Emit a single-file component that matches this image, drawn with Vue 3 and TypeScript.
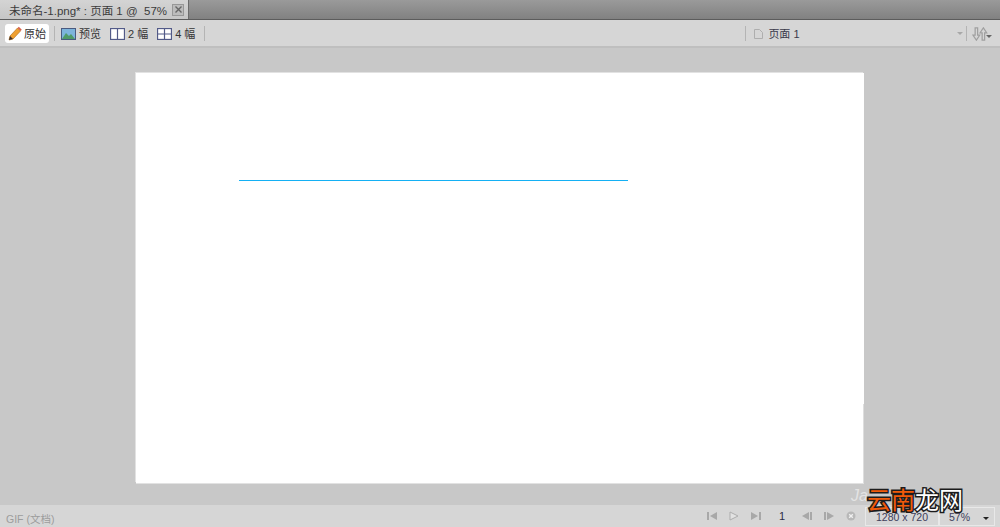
<script setup lang="ts">
const viewButtons = [
  { label: '预览', icon: 'preview' },
  { label: '2 幅', icon: 'two' },
  { label: '4 幅', icon: 'four' },
]
</script>

<template>
  <div class="window">
    <div class="tabbar">
      <div class="tab">
        <span>未命名-1.png* : 页面 1 @&nbsp; 57%</span>
        <span class="tab-close">
          <svg width="9" height="9" viewBox="0 0 9 9"><path d="M1.5 1.5l6 6M7.5 1.5l-6 6" stroke="#666" stroke-width="1.4" fill="none" /></svg>
        </span>
      </div>
    </div>

    <div class="toolbar">
      <div class="btn-original">
        <svg width="15" height="15" viewBox="0 0 15 15">
          <path d="M1 14l1-4 7.5-8 3 3L5 13z" fill="#f0a030" stroke="#a86818" stroke-width=".6" />
          <path d="M9.5 2l1.3-1.2 3 3L12.5 5z" fill="#d8604c" />
          <path d="M1 14l1-4 3 3z" fill="#40302a" />
        </svg>
        <span>原始</span>
      </div>
      <div class="sep"></div>
      <div v-for="b in viewButtons" :key="b.label" class="view-btn">
        <svg v-if="b.icon === 'preview'" width="15" height="12" viewBox="0 0 15 12">
          <rect x=".5" y=".5" width="14" height="11" fill="#7db4dc" stroke="#4a5a80" />
          <path d="M1 11l4-6 3 3 2-2 4 5z" fill="#4f9a68" />
        </svg>
        <svg v-else width="15" height="12" viewBox="0 0 15 12">
          <rect x=".5" y=".5" width="14" height="11" fill="#fff" stroke="#525a88" stroke-width="1.3" />
          <path v-if="b.icon === 'two'" d="M7.5 1v10" stroke="#525a88" stroke-width="1.2" />
          <path v-else d="M7.5 1v10M1 6h13" stroke="#525a88" stroke-width="1.2" />
        </svg>
        <span>{{ b.label }}</span>
      </div>
      <div class="sep last"></div>

      <div class="toolbar-right">
        <div class="sep"></div>
        <svg class="page-icon" width="9" height="10" viewBox="0 0 9 10"><path d="M.5.5h5l3 3v6h-8z" fill="none" stroke="#aeaeae" /></svg>
        <span class="page-name">页面 1</span>
        <span class="combo-arrow"></span>
        <div class="sep"></div>
        <svg class="updown" width="17" height="14" viewBox="0 0 20 17">
          <path d="M3.5 1h3v9H9l-4 6-4-6h2.500z" fill="none" stroke="#a0a0a0" stroke-width="1.5" />
          <path d="M12 16V7H9.500l4-6 4 6H15v9z" fill="none" stroke="#a0a0a0" stroke-width="1.5" />
        </svg>
        <span class="combo-arrow small"></span>
      </div>
    </div>

    <div class="canvas">
      <div class="page">
        <div class="line"></div>
      </div>
    </div>

    <div class="statusbar">
      <span class="doc-type">GIF (文档)</span>
      <div class="player">
        <svg width="10" height="10" viewBox="0 0 10 10"><path d="M0 1h2v8H0zM10 1v8L3 5z" fill="#a8a8a8" /></svg>
        <svg width="10" height="10" viewBox="0 0 10 10"><path d="M1 1v8l8-4z" fill="#e2e2e2" stroke="#adadad" /></svg>
        <svg width="10" height="10" viewBox="0 0 10 10"><path d="M0 1v8l7-4zM8 1h2v8H8z" fill="#a8a8a8" /></svg>
        <span class="frame">1</span>
        <svg width="10" height="10" viewBox="0 0 10 10"><path d="M7 1v8L0 5zM8 1h2v8H8z" fill="#a8a8a8" /></svg>
        <svg width="10" height="10" viewBox="0 0 10 10"><path d="M0 1h2v8H0zM3 1v8l7-4z" fill="#a8a8a8" /></svg>
        <svg width="10" height="10" viewBox="0 0 10 10"><circle cx="5" cy="5" r="4.500" fill="#b8b8b8" /><path d="M3.200 3.200l3.600 3.600M6.800 3.200l-3.600 3.600" stroke="#f0f0f0" stroke-width="1.400" /></svg>
      </div>
      <div class="size-box">1280 x 720</div>
      <div class="zoom-box">
        <span>57%</span>
        <span class="zoom-arrow"></span>
      </div>
    </div>

    <div class="watermark"><span class="wm-ja">Ja</span><span class="wm-orange">云南</span><span class="wm-white">龙网</span></div>
  </div>
</template>

<style scoped>
.window {
  position: relative;
  display: flex;
  flex-direction: column;
  width: 1000px;
  height: 527px;
  overflow: hidden;
  background: #c8c8c8;
  font-family: "Liberation Sans", "Noto Sans CJK SC", sans-serif;
  font-size: 11px;
  color: #333;
}
.tabbar {
  display: flex;
  flex: none;
  height: 20px;
  box-sizing: border-box;
  background: linear-gradient(#9a9a9a, #818181);
  border-bottom: 1px solid #5c5c5c;
}
.tab {
  display: flex;
  align-items: center;
  justify-content: space-between;
  width: 189px;
  box-sizing: border-box;
  padding: 0 4px 0 9px;
  background: linear-gradient(#d4d4d4, #c6c6c6);
  border-right: 1px solid #6c6c6c;
  font-size: 11.5px;
  color: #3c3c3c;
  white-space: nowrap;
}
.tab-close {
  display: flex;
  align-items: center;
  justify-content: center;
  width: 12px;
  height: 12px;
  box-sizing: border-box;
  background: #bcbcbc;
  border: 1px solid #989898;
}
.toolbar {
  display: flex;
  flex: none;
  align-items: center;
  height: 28px;
  box-sizing: border-box;
  padding: 1px 0 0 5px;
  background: #d6d6d6;
  border-bottom: 2px solid #bfbfbf;
}
.btn-original {
  display: flex;
  align-items: center;
  gap: 1px;
  width: 44px;
  height: 19px;
  box-sizing: border-box;
  padding-left: 3px;
  background: #fff;
  border-radius: 3px;
}
.btn-original span,
.view-btn span,
.page-name {
  margin-top: -2px;
}
.sep {
  flex: none;
  width: 1px;
  height: 15px;
  margin: 0 6px 0 5px;
  background: #b4b4b4;
}
.sep.last {
  margin-left: 0;
}
.view-btn {
  display: flex;
  align-items: center;
  gap: 3px;
  margin-right: 9px;
  color: #353535;
}
.toolbar-right {
  display: flex;
  align-items: center;
  margin-left: 529px;
}
.page-icon {
  margin: 0 4px 0 2px;
}
.page-name {
  width: 189px;
  margin-left: 1px;
  color: #3a3a4a;
}
.combo-arrow {
  width: 0;
  height: 0;
  margin-right: -2px;
  border-left: 3px solid transparent;
  border-right: 3px solid transparent;
  border-top: 3px solid #a8a8a8;
}
.combo-arrow.small {
  align-self: flex-end;
  margin: 0 0 3px -3px;
  border-top-color: #666;
}
.updown {
  margin-left: -1px;
}
.canvas {
  display: flex;
  flex: 1;
  justify-content: center;
  padding-top: 25px;
  background: #c8c8c8;
}
.page {
  position: relative;
  width: 728px;
  height: 410px;
  box-sizing: border-box;
  padding: 107px 0 0 103px;
  background: #fff;
  box-shadow: -1px -1px 0 #e2e2e2, 0 1px 0 #e2e2e2;
}
/* the lower right edge of the page is rubbed off a little in the shot */
.page::after {
  content: "";
  position: absolute;
  right: 0;
  top: 331px;
  bottom: 0;
  width: 1px;
  background: #dedede;
}
.line {
  width: 389px;
  height: 1px;
  background: #14b0f4;
}
.statusbar {
  display: flex;
  flex: none;
  align-items: center;
  height: 22px;
  box-sizing: border-box;
  padding-left: 6px;
  background: #d6d6d6;
}
.doc-type {
  margin-top: 4px;
  font-size: 10.5px;
  color: #9c9c9c;
}
.player {
  display: flex;
  align-items: center;
  gap: 12px;
  margin-left: auto;
  margin-right: 9px;
}
.frame {
  margin: 0 5px 0 6px;
  color: #2c2c48;
}
.size-box,
.zoom-box {
  display: flex;
  align-items: center;
  height: 19px;
  margin-top: 1px;
  box-sizing: border-box;
  background: #d6d6d6;
  border: 1px solid #e8e8e8;
  font-size: 10.5px;
  color: #40405a;
}
.size-box {
  justify-content: center;
  width: 74px;
}
.zoom-box {
  justify-content: space-between;
  width: 56px;
  margin-right: 5px;
  padding: 0 5px 0 9px;
}
.zoom-arrow {
  width: 0;
  height: 0;
  margin-top: 3px;
  border-left: 3px solid transparent;
  border-right: 3px solid transparent;
  border-top: 3px solid #222;
}
.watermark {
  position: absolute;
  left: 851px;
  top: 481px;
  display: flex;
  align-items: center;
  font-size: 24px;
  line-height: 30px;
  font-family: "Noto Sans CJK SC", sans-serif;
  white-space: nowrap;
}
.wm-ja {
  width: 16px;
  margin-bottom: 6px;
  font-family: "Liberation Sans", sans-serif;
  font-size: 16px;
  font-style: italic;
  color: #e4e4e4;
}
.wm-orange,
.wm-white {
  -webkit-text-stroke: 3px #1c1c1c;
  paint-order: stroke fill;
}
.wm-orange {
  color: #f05a0a;
}
.wm-white {
  color: #fff;
}
</style>
